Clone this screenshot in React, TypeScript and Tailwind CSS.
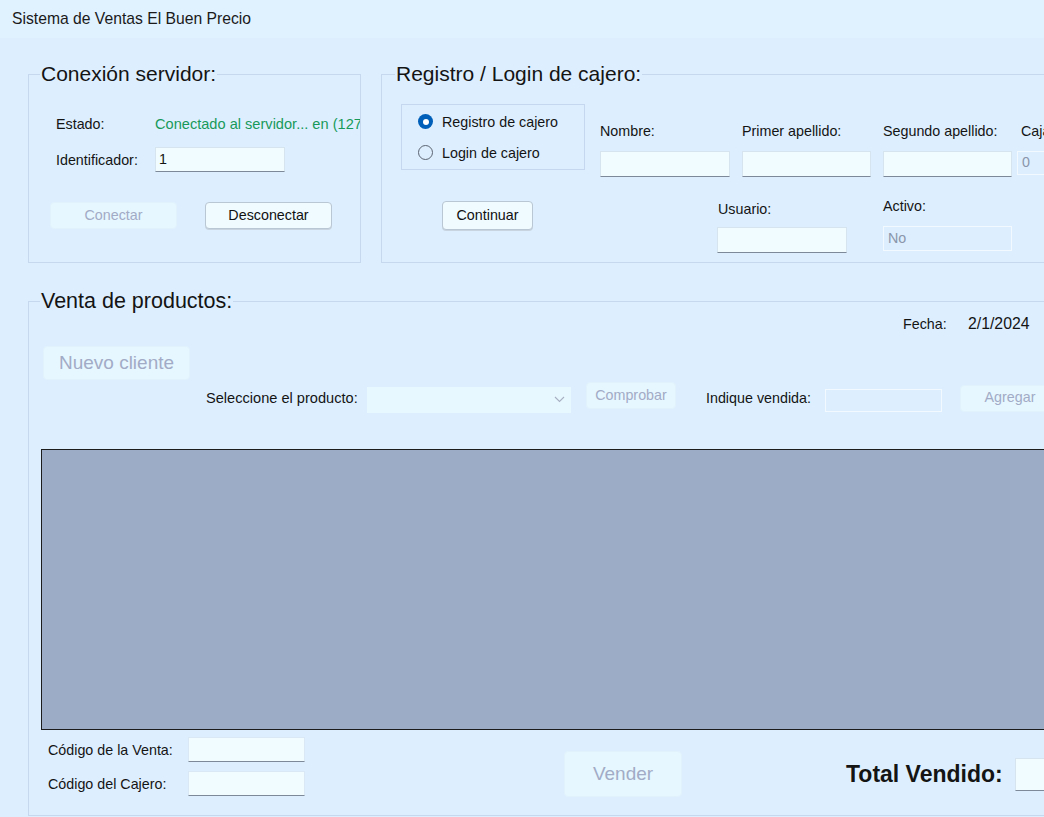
import React from "react";

const txt = "text-[14.3px] leading-[20px] text-[#141414] whitespace-nowrap";

function Input({ w, h = 25, children, className = "" }: { w: number; h?: number; children?: React.ReactNode; className?: string }) {
  return (
    <div
      className={`bg-[#f0fcff] border border-[#d6e4f0] border-b-[#7d8898] flex items-center pl-[3px] text-[14.3px] text-[#141414] ${className}`}
      style={{ width: w, height: h }}
    >
      {children}
    </div>
  );
}

function DisabledInput({ w, h = 25, children, className = "" }: { w: number; h?: number; children?: React.ReactNode; className?: string }) {
  return (
    <div
      className={`bg-[#ddeefe] border border-[#f3faff] flex items-center pl-[4px] text-[14.3px] text-[#8a96ab] ${className}`}
      style={{ width: w, height: h }}
    >
      {children}
    </div>
  );
}

function Btn({ w, h, children, className = "" }: { w: number; h: number; children: React.ReactNode; className?: string }) {
  return (
    <div
      className={`bg-[#effbff] border border-[#b9c6d3] rounded-[4px] shadow-[0_1px_0_#c8d4e0] flex items-center justify-center text-[14.3px] text-[#111] ${className}`}
      style={{ width: w, height: h }}
    >
      {children}
    </div>
  );
}

function DBtn({ w, h, children, className = "" }: { w: number; h: number; children: React.ReactNode; className?: string }) {
  return (
    <div
      className={`bg-[#e6f7ff] border border-[#e1f2fd] rounded-[4px] flex items-center justify-center text-[#a2abc6] ${className}`}
      style={{ width: w, height: h }}
    >
      {children}
    </div>
  );
}

export default function App() {
  return (
    <div className="w-[1044px] h-[817px] overflow-hidden bg-[#ddefff] font-['Liberation_Sans',Arial,sans-serif] text-[#141414]">
      {/* Title bar */}
      <div className="h-[38px] flex items-center pl-[12px] bg-[#e0f1ff] text-[15.7px] text-[#1a1a1a] whitespace-nowrap">
        Sistema de Ventas El Buen Precio
      </div>

      {/* Top row */}
      <div className="flex mt-[24px] ml-[28px]">
        {/* Conexion servidor */}
        <fieldset className="w-[333px] min-w-0 h-[201px] border border-[#c6d8ee] shrink-0">
          <legend className="ml-[11px] px-[1px] text-[21px] leading-[24px] text-[#141414] whitespace-nowrap">
            Conexión servidor:
          </legend>
          <div className="flex flex-col pl-[21px]">
            <div className="flex items-center h-[20px] mt-[28px] ml-[6px]">
              <span className={`${txt} w-[99px] shrink-0`}>Estado:</span>
              <span className="w-[205px] overflow-hidden text-[14.6px] leading-[20px] text-[#18995a] whitespace-nowrap">
                Conectado al servidor... en (127.0.0.1)
              </span>
            </div>
            <div className="flex items-center mt-[13px] ml-[6px]">
              <span className={`${txt} w-[99px]`}>Identificador:</span>
              <Input w={130} h={25}>1</Input>
            </div>
            <div className="flex mt-[30px]">
              <DBtn w={127} h={27} className="text-[14.3px]">Conectar</DBtn>
              <Btn w={127} h={27} className="ml-[28px]">Desconectar</Btn>
            </div>
          </div>
        </fieldset>

        {/* Registro / Login */}
        <fieldset className="ml-[20px] w-[720px] min-w-0 h-[201px] border border-[#c6d8ee] shrink-0">
          <legend className="ml-[13px] px-[1px] text-[21px] leading-[24px] text-[#141414] whitespace-nowrap">
            Registro / Login de cajero:
          </legend>
          <div className="flex">
            {/* left column */}
            <div className="flex flex-col ml-[19px] mt-[18px]">
              <div className="w-[184px] h-[66px] border border-[#c4d7ee] flex flex-col justify-center gap-[11px] pl-[16px]">
                <div className="flex items-center">
                  <span className="w-[15px] h-[15px] rounded-full bg-[#005fb8] flex items-center justify-center">
                    <span className="w-[6px] h-[6px] rounded-full bg-white" />
                  </span>
                  <span className={`${txt} ml-[9px]`}>Registro de cajero</span>
                </div>
                <div className="flex items-center">
                  <span className="w-[15px] h-[15px] rounded-full border-[1.5px] border-[#5b6370]" />
                  <span className={`${txt} ml-[9px]`}>Login de cajero</span>
                </div>
              </div>
              <Btn w={91} h={29} className="ml-[41px] mt-[31px]">Continuar</Btn>
            </div>

            {/* fields */}
            <div className="flex flex-col ml-[15px] mt-[35px]">
              <div className="flex">
                <div className="flex flex-col w-[142px]">
                  <span className={txt}>Nombre:</span>
                  <Input w={130} h={26} className="mt-[10px]" />
                </div>
                <div className="flex flex-col w-[141px]">
                  <span className={txt}>Primer apellido:</span>
                  <Input w={129} h={26} className="mt-[10px]" />
                </div>
                <div className="flex flex-col w-[138px]">
                  <span className={txt}>Segundo apellido:</span>
                  <Input w={129} h={26} className="mt-[10px]" />
                </div>
                <div className="flex flex-col">
                  <span className={txt}>Caja:</span>
                  <DisabledInput w={100} h={24} className="mt-[10px] -ml-[4px]">0</DisabledInput>
                </div>
              </div>
              <div className="flex">
                <div className="flex flex-col ml-[117px] w-[166px] mt-[22px]">
                  <span className={`${txt} ml-[1px]`}>Usuario:</span>
                  <Input w={130} h={26} className="mt-[8px]" />
                </div>
                <div className="flex flex-col mt-[19px]">
                  <span className={txt}>Activo:</span>
                  <DisabledInput w={129} h={25} className="mt-[10px]">No</DisabledInput>
                </div>
              </div>
            </div>
          </div>
        </fieldset>
      </div>

      {/* Venta de productos */}
      <fieldset className="ml-[28px] mt-[26px] w-[1100px] min-w-0 h-[527px] border border-[#c6d8ee]">
        <legend className="ml-[11px] px-[1px] text-[21.5px] leading-[24px] text-[#141414] whitespace-nowrap">
          Venta de productos:
        </legend>
        <div className="flex flex-col">
          <div className="flex items-center h-[20px] mt-[1px] ml-[874px]">
            <span className={`${txt} w-[65px]`}>Fecha:</span>
            <span className="text-[15.8px] leading-[20px] text-[#141414]">2/1/2024</span>
          </div>

          <DBtn w={147} h={34} className="ml-[14px] mt-[12px] text-[19px]">Nuevo cliente</DBtn>

          <div className="flex items-center h-[32px] mt-[2px]">
            <span className={`${txt} ml-[177px] w-[161px] text-[14.6px]`}>Seleccione el producto:</span>
            <div className="w-[204px] h-[26px] bg-[#e8f8ff] flex items-center justify-end pr-[6px] mt-[3px]">
              <svg width="11" height="7" viewBox="0 0 11 7" fill="none">
                <path d="M1 1l4.5 4.5L10 1" stroke="#a6b0c2" strokeWidth="1.1" />
              </svg>
            </div>
            <DBtn w={90} h={27} className="ml-[15px] -mt-[5px] text-[14.3px]">Comprobar</DBtn>
            <span className={`${txt} ml-[30px] w-[119px]`}>Indique vendida:</span>
            <DisabledInput w={117} h={23} className="mt-[5px]" />
            <DBtn w={100} h={27} className="ml-[18px] text-[14.3px]">Agregar</DBtn>
          </div>

          <div className="ml-[12px] mt-[35px] w-[1060px] h-[281px] bg-[#9dacc6] border-[1.5px] border-[#1c1c1c]" />

          <div className="flex items-start">
            <div className="flex flex-col ml-[19px] mt-[7px] gap-[9px]">
              <div className="flex items-center">
                <span className={`${txt} w-[140px]`}>Código de la Venta:</span>
                <Input w={117} h={25} className="border-[#d9e8f4] bg-[#e4f4ff]" />
              </div>
              <div className="flex items-center">
                <span className={`${txt} w-[140px]`}>Código del Cajero:</span>
                <Input w={117} h={25} className="border-[#d9e8f4] bg-[#e4f4ff]" />
              </div>
            </div>
            <DBtn w={118} h={46} className="ml-[259px] mt-[21px] text-[19px]">Vender</DBtn>
            <div className="flex items-center ml-[164px] mt-[28px]">
              <span className="text-[23px] font-bold leading-[33px] text-[#141414] whitespace-nowrap w-[169px]">
                Total Vendido:
              </span>
              <Input w={80} h={33} className="bg-[#eefaff]" />
            </div>
          </div>
        </div>
      </fieldset>
    </div>
  );
}
